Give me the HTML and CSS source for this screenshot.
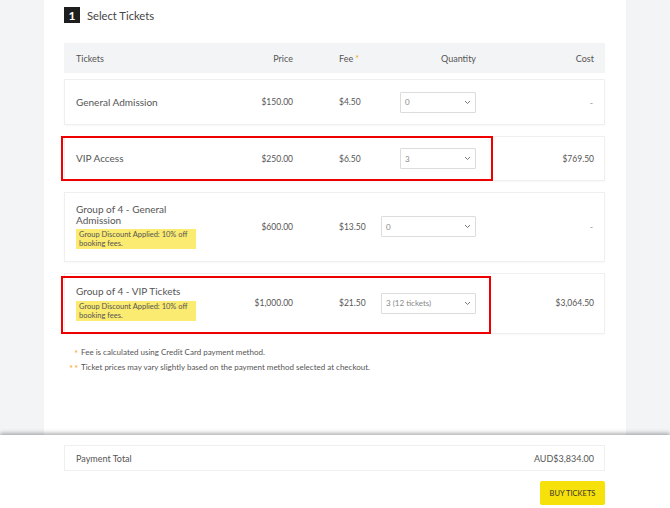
FILE: index.html
```html
<!DOCTYPE html>
<html>
<head>
<meta charset="utf-8">
<link rel="stylesheet" href="styles.css">
</head>
<body>
<div class="main">
  <div class="step">
    <span class="step-num">1</span>
    <span class="step-title">Select Tickets</span>
  </div>
  <div class="thead row-grid">
    <div>Tickets</div>
    <div class="r">Price</div>
    <div class="fee-col">Fee<span class="star">*</span></div>
    <div class="r">Quantity</div>
    <div class="r">Cost</div>
  </div>

  <div class="trow row-grid h46 first">
    <div class="name">General Admission</div>
    <div class="r num">$150.00</div>
    <div class="fee-col num">$4.50</div>
    <div class="r"><div class="sel w75"><span>0</span><svg width="7" height="5" viewBox="0 0 7 5"><path d="M1 1l2.5 2.5L6 1" fill="none" stroke="#777" stroke-width="1"/></svg></div></div>
    <div class="r dash">-</div>
  </div>

  <div class="trow row-grid h45">
    <div class="name">VIP Access</div>
    <div class="r num">$250.00</div>
    <div class="fee-col num">$6.50</div>
    <div class="r"><div class="sel w75"><span>3</span><svg width="7" height="5" viewBox="0 0 7 5"><path d="M1 1l2.5 2.5L6 1" fill="none" stroke="#777" stroke-width="1"/></svg></div></div>
    <div class="r num">$769.50</div>
    <div class="mark mark1"></div>
  </div>

  <div class="trow row-grid tall">
    <div>
      <div class="name">Group of 4 - General<br>Admission</div>
      <div class="badge">Group Discount Applied: 10% off booking fees.</div>
    </div>
    <div class="r num">$600.00</div>
    <div class="fee-col num">$13.50</div>
    <div class="r"><div class="sel w94"><span>0</span><svg width="7" height="5" viewBox="0 0 7 5"><path d="M1 1l2.5 2.5L6 1" fill="none" stroke="#777" stroke-width="1"/></svg></div></div>
    <div class="r dash">-</div>
  </div>

  <div class="trow row-grid tall t4">
    <div>
      <div class="name">Group of 4 - VIP Tickets</div>
      <div class="badge">Group Discount Applied: 10% off booking fees.</div>
    </div>
    <div class="r num">$1,000.00</div>
    <div class="fee-col num">$21.50</div>
    <div class="r"><div class="sel w94"><span>3 (12 tickets)</span><svg width="7" height="5" viewBox="0 0 7 5"><path d="M1 1l2.5 2.5L6 1" fill="none" stroke="#777" stroke-width="1"/></svg></div></div>
    <div class="r num">$3,064.50</div>
    <div class="mark mark2"></div>
  </div>

  <div class="notes">
    <div class="note"><span class="stars">*</span><span>Fee is calculated using Credit Card payment method.</span></div>
    <div class="note"><span class="stars">**</span><span>Ticket prices may vary slightly based on the payment method selected at checkout.</span></div>
  </div>
</div>
<div class="footer">
  <div class="footer-inner">
    <div class="total">
      <span>Payment Total</span>
      <span>AUD$3,834.00</span>
    </div>
    <div class="actions">
      <button class="buy">BUY TICKETS</button>
    </div>
  </div>
</div>
</body>
</html>
```
FILE: styles.css
```css
* { box-sizing: border-box; }
html, body { margin: 0; padding: 0; }
body {
  background: #f3f4f6;
  font-family: Lato, "Open Sans", sans-serif;
  color: #555;
  width: 670px;
  height: 508px;
  overflow: hidden;
}
.main {
  width: 582px;
  margin: 0 auto;
  background: #fff;
  height: 435px;
  padding: 7px 21px 0 20px;
}
.step {
  display: flex;
  align-items: center;
  height: 16px;
}
.step-num {
  width: 16px;
  height: 16px;
  background: #1e1e1e;
  color: #fff;
  font-weight: 700;
  font-size: 12px;
  display: flex;
  align-items: center;
  justify-content: center;
}
.step-title {
  margin-left: 7px;
  font-size: 11.2px;
  color: #444;
}
.row-grid {
  display: grid;
  grid-template-columns: 144px 73px 88px 95px 118px;
  align-items: center;
  padding: 0 11px 0 12px;
}
.r { justify-self: end; text-align: right; }
.fee-col { padding-left: 46px; }
.thead {
  margin-top: 20px;
  height: 30px;
  background: #f3f4f6;
  font-size: 9px;
  color: #555;
}
.star { color: #f5a623; font-size: 9px; vertical-align: 0; margin-left: 2px; }
.trow {
  position: relative;
  background: #fff;
  border: 1px solid #efefef;
  box-shadow: 0 1px 2px rgba(0,0,0,0.03);
  margin-top: 11px;
  padding: 0 10px 0 11px;
}
.trow.first { margin-top: 6px; }
.h46 { height: 46px; }
.h45 { height: 45px; }
.trow.tall { padding-top: 11px; padding-bottom: 12px; }
.trow.t4 { padding-top: 12px; padding-bottom: 12px; }
.name {
  font-size: 10px;
  color: #555;
  line-height: 10.5px;
}
.num { font-size: 8.5px; color: #555; }
.dash { font-size: 9px; color: #999; padding-right: 1px; }
.badge {
  margin-top: 4px;
  width: 120px;
  background: #fbeb70;
  font-size: 7.5px;
  line-height: 9px;
  color: #555;
  padding: 1px 3px 1px 3px;
}
.sel {
  height: 21px;
  border: 1px solid #dcdcdc;
  border-radius: 1px;
  display: flex;
  align-items: center;
  justify-content: space-between;
  padding: 0 4px 0 4px;
  font-size: 8px;
  color: #888;
  background: #fff;
}
.w75 { width: 76px; }
.w94 { width: 95px; }
.mark {
  position: absolute;
  border: 2.5px solid #ee0000;
  pointer-events: none;
}
.mark1 { left: -4px; top: -1px; width: 432px; height: 45px; }
.mark2 { left: -4px; top: 2px; width: 430px; height: 58px; }
.notes {
  margin-top: 11px;
  padding-left: 5px;
  font-size: 8px;
  color: #555;
}
.note {
  display: flex;
  align-items: center;
  height: 15px;
}
.stars {
  width: 12px;
  text-align: right;
  padding-right: 2px;
  color: #f5a623;
  font-size: 9px;
  letter-spacing: 1px;
  position: relative;
  top: 1px;
}
.footer {
  background: #fff;
  height: 73px;
  box-shadow: 0 -2px 4px rgba(0,0,0,0.3);
  position: relative;
  padding-top: 10px;
}
.footer-inner {
  width: 541px;
  margin-left: 64px;
}
.total {
  height: 26px;
  border: 1px solid #efefef;
  display: flex;
  align-items: center;
  justify-content: space-between;
  padding: 0 10px 0 11px;
  font-size: 9px;
  color: #555;
}
.actions {
  display: flex;
  justify-content: flex-end;
  margin-top: 10px;
}
.buy {
  width: 65px;
  height: 24px;
  border: none;
  border-radius: 2px;
  background: #f7e10a;
  font-family: Lato, sans-serif;
  font-size: 7.5px;
  color: #333;
  padding: 0;
}
```
